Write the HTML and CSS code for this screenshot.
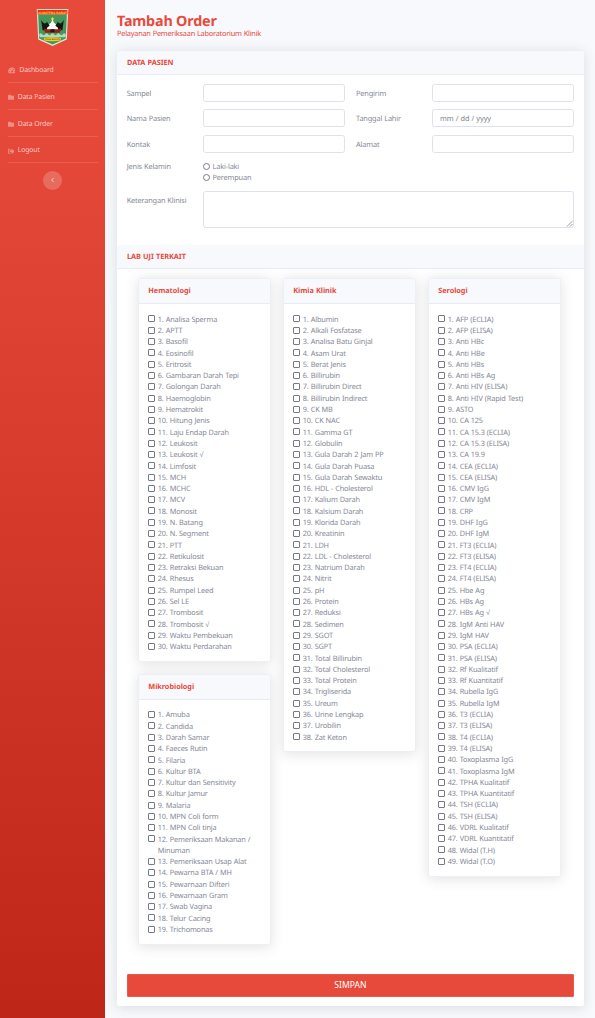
FILE: index.html
```html
<!DOCTYPE html>
<html lang="id">
<head>
<meta charset="utf-8">
<title>Tambah Order</title>
<link rel="stylesheet" href="styles.css">
</head>
<body>
<div class="wrapper">
<aside class="sidebar">
  <div class="brand">
    <svg class="logo" viewBox="0 0 64 76">
      <path d="M0 0H64L61 62L32 75L3 62Z" fill="#dfe6dc"/>
      <path d="M3 11H61L59 60L32 72L5 60Z" fill="#43985a"/>
      <path d="M2 2H62V11H2Z" fill="#ef2b17"/>
      <text x="32" y="9.6" class="logo-title">SUMATERA BARAT</text>
      <path d="M9 22C14 31 18 31 21 26C24 33 27 34 32 34C37 34 40 33 43 26C46 31 50 31 55 22L52 43H12Z" fill="#171513"/>
      <path d="M14 40H50L47 48H17Z" fill="#8c2218"/>
      <path d="M32 20L35 28L39 31L38 34L43 38V41H21V38L26 34L25 31L29 28Z" fill="#fff"/>
      <path d="M32 15L33 18L36 18L34 20L35 23L32 21L29 23L30 20L28 18L31 18Z" fill="#f4d32a"/>
      <path d="M28 41H36V47H28Z" fill="#2a1712"/>
      <path d="M5 51q3-4 6 0t6 0t6 0t6 0t6 0t6 0t6 0t6 0t6 0V57H6Z" fill="#b6d6bd"/>
      <path d="M15 59Q32 56 49 59V64Q32 67 15 64Z" fill="#f3ce20"/>
      <text x="32" y="63.7" class="logo-motto">TUAH SAKATO</text>
    </svg>
  </div>
  <nav class="menu">
    <a class="item"><svg class="ico wide" viewBox="0 0 576 512"><path fill-rule="evenodd" d="M288 32C129 32 0 161 0 320c0 53 14 102 39 145 6 9 16 15 27 15h444c11 0 21-6 27-15 25-43 39-92 39-145C576 161 447 32 288 32Zm0 64a32 32 0 1 1 0 64 32 32 0 0 1 0-64ZM96 384a32 32 0 1 1 0-64 32 32 0 0 1 0 64Zm48-160a32 32 0 1 1 0-64 32 32 0 0 1 0 64Zm247-77 30 10-62 185c20 18 25 45 10 74H207c-20-45 12-94 61-96l20 2Zm41 77a32 32 0 1 1 0-64 32 32 0 0 1 0 64Zm48 160a32 32 0 1 1 0-64 32 32 0 0 1 0 64Z"/></svg>Dashboard</a>
    <a class="item"><svg class="ico" viewBox="0 0 512 512"><path d="M464 128H272l-64-64H48C22 64 0 86 0 112v288c0 27 22 48 48 48h416c27 0 48-21 48-48V176c0-26-21-48-48-48Z"/></svg>Data Pasien</a>
    <a class="item"><svg class="ico" viewBox="0 0 512 512"><path d="M464 128H272l-64-64H48C22 64 0 86 0 112v288c0 27 22 48 48 48h416c27 0 48-21 48-48V176c0-26-21-48-48-48Z"/></svg>Data Order</a>
    <a class="item"><svg class="ico" viewBox="0 0 512 512"><path d="m497 273-168 168c-15 15-41 4-41-17v-96H152c-13 0-24-11-24-24v-96c0-13 11-24 24-24h136V88c0-21 26-32 41-17l168 168c9 9 9 25 0 34ZM192 436v-40c0-7-5-12-12-12H96c-18 0-32-14-32-32V160c0-18 14-32 32-32h84c7 0 12-5 12-12V76c0-7-5-12-12-12H96c-53 0-96 43-96 96v192c0 53 43 96 96 96h84c7 0 12-5 12-12Z"/></svg>Logout</a>
  </nav>
  <button class="toggle" aria-label="Toggle"><svg viewBox="0 0 6 8"><path d="M4.5 1.2 1.8 4l2.7 2.8"/></svg></button>
</aside>
<main class="content">
  <h1>Tambah Order</h1>
  <p class="subtitle">Pelayanan Pemeriksaan Laboratorium Klinik</p>
  <section class="card">
    <h2 class="card-header">DATA PASIEN</h2>
    <div class="form">
      <span class="lbl">Sampel</span><div class="field"></div><span class="lbl">Pengirim</span><div class="field"></div>
      <span class="lbl">Nama Pasien</span><div class="field"></div><span class="lbl">Tanggal Lahir</span><div class="field date">mm / dd / yyyy</div>
      <span class="lbl">Kontak</span><div class="field"></div><span class="lbl">Alamat</span><div class="field"></div>
    </div>
    <div class="form-row gender">
      <span class="lbl">Jenis Kelamin</span>
      <div><label class="radio">Laki-laki</label><label class="radio">Perempuan</label></div>
    </div>
    <div class="form-row notes">
      <span class="lbl">Keterangan Klinisi</span>
      <div class="area"><svg class="grip" viewBox="0 0 8 8"><path d="M1 7.5 7.5 1M4.5 7.5l3-3"/></svg></div>
    </div>
    <h2 class="card-header second">LAB UJI TERKAIT</h2>
    <div class="labs">
      <div class="col">
        <section class="panel"><h3>Hematologi</h3><div class="list">
          <label>1. Analisa Sperma</label><label>2. APTT</label><label>3. Basofil</label><label>4. Eosinofil</label><label>5. Eritrosit</label><label>6. Gambaran Darah Tepi</label><label>7. Golongan Darah</label><label>8. Haemoglobin</label><label>9. Hematrokit</label><label>10. Hitung Jenis</label><label>11. Laju Endap Darah</label><label>12. Leukosit</label><label>13. Leukosit √</label><label>14. Limfosit</label><label>15. MCH</label><label>16. MCHC</label><label>17. MCV</label><label>18. Monosit</label><label>19. N. Batang</label><label>20. N. Segment</label><label>21. PTT</label><label>22. Retikulosit</label><label>23. Retraksi Bekuan</label><label>24. Rhesus</label><label>25. Rumpel Leed</label><label>26. Sel LE</label><label>27. Trombosit</label><label>28. Trombosit √</label><label>29. Waktu Pembekuan</label><label>30. Waktu Perdarahan</label>
        </div></section>
        <section class="panel"><h3>Mikrobiologi</h3><div class="list">
          <label>1. Amuba</label><label>2. Candida</label><label>3. Darah Samar</label><label>4. Faeces Rutin</label><label>5. Filaria</label><label>6. Kultur BTA</label><label>7. Kultur dan Sensitivity</label><label>8. Kultur Jamur</label><label>9. Malaria</label><label>10. MPN Coli form</label><label>11. MPN Coli tinja</label><label>12. Pemeriksaan Makanan /<br>Minuman</label><label>13. Pemeriksaan Usap Alat</label><label>14. Pewarna BTA / MH</label><label>15. Pewarnaan Difteri</label><label>16. Pewarnaan Gram</label><label>17. Swab Vagina</label><label>18. Telur Cacing</label><label>19. Trichomonas</label>
        </div></section>
      </div>
      <div class="col">
        <section class="panel"><h3>Kimia Klinik</h3><div class="list">
          <label>1. Albumin</label><label>2. Alkali Fosfatase</label><label>3. Analisa Batu Ginjal</label><label>4. Asam Urat</label><label>5. Berat Jenis</label><label>6. Billirubin</label><label>7. Billirubin Direct</label><label>8. Billirubin Indirect</label><label>9. CK MB</label><label>10. CK NAC</label><label>11. Gamma GT</label><label>12. Globulin</label><label>13. Gula Darah 2 Jam PP</label><label>14. Gula Darah Puasa</label><label>15. Gula Darah Sewaktu</label><label>16. HDL - Cholesterol</label><label>17. Kalium Darah</label><label>18. Kalsium Darah</label><label>19. Klorida Darah</label><label>20. Kreatinin</label><label>21. LDH</label><label>22. LDL - Cholesterol</label><label>23. Natrium Darah</label><label>24. Nitrit</label><label>25. pH</label><label>26. Protein</label><label>27. Reduksi</label><label>28. Sedimen</label><label>29. SGOT</label><label>30. SGPT</label><label>31. Total Billirubin</label><label>32. Total Cholesterol</label><label>33. Total Protein</label><label>34. Trigliserida</label><label>35. Ureum</label><label>36. Urine Lengkap</label><label>37. Urobilin</label><label>38. Zat Keton</label>
        </div></section>
      </div>
      <div class="col">
        <section class="panel"><h3>Serologi</h3><div class="list">
          <label>1. AFP (ECLIA)</label><label>2. AFP (ELISA)</label><label>3. Anti HBc</label><label>4. Anti HBe</label><label>5. Anti HBs</label><label>6. Anti HBs Ag</label><label>7. Anti HIV (ELISA)</label><label>8. Anti HIV (Rapid Test)</label><label>9. ASTO</label><label>10. CA 125</label><label>11. CA 15.3 (ECLIA)</label><label>12. CA 15.3 (ELISA)</label><label>13. CA 19.9</label><label>14. CEA (ECLIA)</label><label>15. CEA (ELISA)</label><label>16. CMV IgG</label><label>17. CMV IgM</label><label>18. CRP</label><label>19. DHF IgG</label><label>20. DHF IgM</label><label>21. FT3 (ECLIA)</label><label>22. FT3 (ELISA)</label><label>23. FT4 (ECLIA)</label><label>24. FT4 (ELISA)</label><label>25. Hbe Ag</label><label>26. HBs Ag</label><label>27. HBs Ag √</label><label>28. IgM Anti HAV</label><label>29. IgM HAV</label><label>30. PSA (ECLIA)</label><label>31. PSA (ELISA)</label><label>32. Rf Kualitatif</label><label>33. Rf Kuantitatif</label><label>34. Rubella IgG</label><label>35. Rubella IgM</label><label>36. T3 (ECLIA)</label><label>37. T3 (ELISA)</label><label>38. T4 (ECLIA)</label><label>39. T4 (ELISA)</label><label>40. Toxoplasma IgG</label><label>41. Toxoplasma IgM</label><label>42. TPHA Kualitatif</label><label>43. TPHA Kuantitatif</label><label>44. TSH (ECLIA)</label><label>45. TSH (ELISA)</label><label>46. VDRL Kualitatif</label><label>47. VDRL Kuantitatif</label><label>48. Widal (T.H)</label><label>49. Widal (T.O)</label>
        </div></section>
      </div>
    </div>
    <button class="submit">SIMPAN</button>
  </section>
</main>
</div>
</body>
</html>
```
FILE: styles.css
```css
*, *::before { box-sizing: border-box; }
body {
  margin: 0;
  background: #f8f9fc;
  color: #858796;
  font: 7.35px/11.29px "Noto Sans", sans-serif;
  letter-spacing: -.16px;
  word-spacing: .3px;
  text-rendering: geometricPrecision;
}
h1, h2, h3, p { margin: 0; }
.wrapper { display: flex; height: 1018px; overflow: hidden; }

.sidebar {
  width: 105.4px;
  flex: none;
  background: linear-gradient(180deg, #e74a3b 10%, #be2617 100%);
  display: flex;
  flex-direction: column;
  align-items: center;
}
.brand { height: 56.4px; padding-top: 9px; }
.logo { width: 33px; height: 37.5px; display: block; }
.logo-title { font: bold 6.5px "Liberation Sans", sans-serif; fill: #ffd62c; text-anchor: middle; }
.logo-motto { font: bold 4.5px "Liberation Sans", sans-serif; fill: #54451c; text-anchor: middle; }
.menu { width: 90.4px; }
.item {
  display: flex;
  align-items: center;
  height: 26.75px;
  padding-top: 3px;
  border-bottom: 1px solid rgba(255, 255, 255, .13);
  color: rgba(255, 255, 255, .7);
  font-size: 6.9px;
}
.ico { width: 6.6px; height: 6.6px; margin-right: 3.7px; fill: rgba(255, 255, 255, .38); }
.ico.wide { width: 7.8px; margin-right: 4px; }
.toggle {
  width: 19px;
  height: 19px;
  margin-top: 7.5px;
  padding: 0;
  border: 0;
  border-radius: 50%;
  background: rgba(255, 255, 255, .2);
  display: grid;
  place-items: center;
}
.toggle svg { width: 5px; height: 6px; fill: none; stroke: rgba(255, 255, 255, .65); stroke-width: 1.3; }

.content { flex: 1; padding: 14.4px 12.2px 0 11.6px; }
h1 { color: #e74a3b; font-size: 14.3px; line-height: 16px; word-spacing: 0; }
.subtitle { color: #e74a3b; font-size: 7.35px; line-height: 9px; letter-spacing: -.22px; }
.card {
  margin-top: 11.4px;
  height: 955px;
  background: #fff;
  border-radius: 2.5px;
  box-shadow: 0 1.5px 13px rgba(58, 59, 69, .15);
}
.card-header {
  height: 24px;
  padding: 0 10px;
  background: #f8f9fc;
  border-bottom: 1px solid #e9ebf3;
  border-radius: 2.5px 2.5px 0 0;
  color: #e74a3b;
  font-size: 7.3px;
  letter-spacing: -.02px;
  line-height: 25.4px;
}
.card-header.second { margin-top: 16.8px; border-radius: 0; }
.form {
  padding: 9.2px 9.5px 0 9.7px;
  display: grid;
  grid-template-columns: 76.4px 142px 87px 142px;
  grid-auto-rows: 18px;
  row-gap: 7.5px;
}
.lbl { line-height: 20.4px; }
.form .lbl:nth-child(4n+3) { padding-left: 11px; }
.field, .area { border: 1px solid #dfe1ec; border-radius: 2.6px; background: #fff; }
.field { height: 18px; }
.date { padding-left: 7px; color: #7d7f8c; line-height: 18px; letter-spacing: -.08px; }
.form-row {
  display: grid;
  grid-template-columns: 76.4px 371px;
  padding-left: 9.7px;
}
.gender { margin-top: 8.8px; }
.gender .lbl { line-height: 11.8px; }
.radio { display: block; padding-left: 9.5px; position: relative; }
.radio::before {
  content: "";
  position: absolute;
  left: 0;
  top: 1.4px;
  width: 7px;
  height: 7px;
  border: 1px solid #777988;
  border-radius: 50%;
}
.notes { margin-top: 6.6px; }
.area { height: 37px; display: flex; align-items: flex-end; justify-content: flex-end; }
.grip { width: 7px; height: 7px; fill: none; stroke: #777; stroke-width: .8; }

.labs { display: flex; gap: 11.8px; padding: 9.5px 21px 0 21.3px; height: 705.5px; align-items: flex-start; }
.col { width: 133.2px; display: grid; gap: 12px; }
.panel {
  background: #fff;
  border: 1px solid #edeff6;
  border-radius: 2.5px;
  box-shadow: 0 1.5px 13px rgba(58, 59, 69, .15);
}
.panel h3 {
  height: 24.6px;
  padding-left: 9px;
  background: #f8f9fc;
  border-bottom: 1px solid #e9ebf3;
  color: #e74a3b;
  font-size: 7.3px;
  letter-spacing: -.03px;
  line-height: 25.6px;
}
.list { padding: 10.8px 0 7.4px 9px; }
.list label { display: block; position: relative; padding-left: 9.5px; white-space: nowrap; }
.list label::before {
  content: "";
  position: absolute;
  left: 0;
  top: .8px;
  width: 7px;
  height: 7px;
  border: 1px solid #777988;
  border-radius: 1px;
}
.submit {
  display: block;
  width: 447.5px;
  height: 23px;
  margin: 0 0 0 9.7px;
  padding: 0;
  border: 1px solid #ea5a4c;
  border-radius: 1px;
  background: #e74a3b;
  color: #fff;
  font: 8.6px/21px "Noto Sans", sans-serif;
}
```
